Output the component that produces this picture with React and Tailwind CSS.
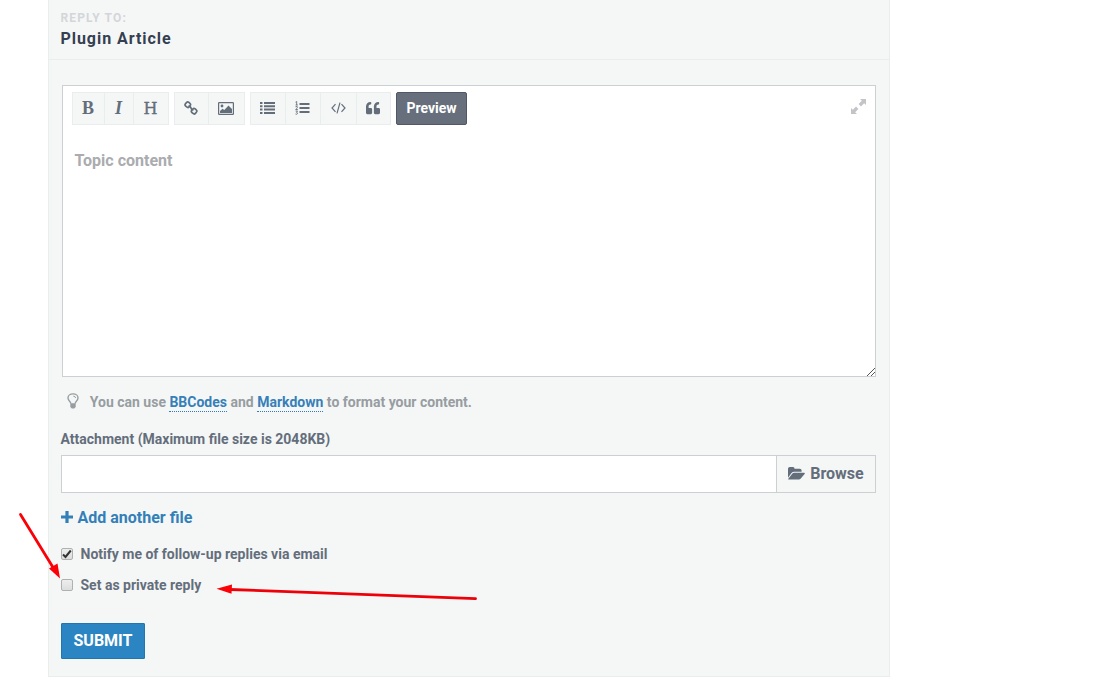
import React from "react";
import { FaQuoteLeft } from "react-icons/fa";

const LinkIcon = () => (
  <svg width="14" height="14" viewBox="0 0 14 14" fill="none" stroke="currentColor">
    <rect x="1.4" y="1.3" width="4.8" height="4.8" rx="1.7" strokeWidth="1.7" transform="rotate(42 3.8 3.7)" />
    <rect x="7.7" y="7.8" width="4.8" height="4.8" rx="1.7" strokeWidth="1.7" transform="rotate(42 10.1 10.2)" />
    <path d="M4.6 5.2Q6.5 4.8 7 7T9.4 9" strokeWidth="1.7" />
  </svg>
);

const ImageIcon = () => (
  <svg width="16" height="13" viewBox="0 0 16 13" fill="currentColor">
    <rect x="0.6" y="0.6" width="14.8" height="11.8" rx="0.6" fill="none" stroke="currentColor" strokeWidth="1.2" />
    <circle cx="4" cy="4" r="1.4" />
    <path d="M2 11V9l2.5-2.2L6.3 8l4.2-4.4L14 7v4z" />
  </svg>
);

const ListIcon = () => (
  <svg width="15" height="12" viewBox="0 0 15 12" fill="currentColor">
    <path d="M0 0h2.5v2H0zM4 0h11v2H4zM0 3.3h2.5v2H0zM4 3.3h11v2H4zM0 6.6h2.5v2H0zM4 6.6h11v2H4zM0 9.9h2.5v2H0zM4 9.9h11v2H4z" />
  </svg>
);

const NumberedIcon = () => (
  <svg width="15" height="14" viewBox="0 0 15 14" fill="none" stroke="currentColor">
    <path d="M4.5 3h10M4.5 7h10M4.5 11h10" strokeWidth="2" />
    <path d="M0.5 1.2L1.7 0.5V4M0.6 4h2.2M0.5 5.8Q2.7 4.8 2.5 6.2Q2.1 7.2 0.7 8.5H2.8M0.6 10H2.5L1.5 11.4Q3 11.6 2.3 12.8Q1.6 13.7 0.5 13" strokeWidth="0.9" />
  </svg>
);

const CodeIcon = () => (
  <svg width="15" height="12" viewBox="0 0 15 12" fill="none" stroke="currentColor" strokeWidth="1.2">
    <path d="M4.5 2.2L1 6l3.5 3.8M10.5 2.2L14 6l-3.5 3.8M9 0.7L6 11.3" />
  </svg>
);

const ExpandIcon = () => (
  <svg width="15" height="15" viewBox="0 0 14 14" fill="currentColor">
    <path d="M8.4 0H14v5.6l-1.7-1.7-3 3-2.2-2.2 3-3zM5.6 14H0V8.4l1.7 1.7 3-3 2.2 2.2-3 3z" />
  </svg>
);

const BulbIcon = () => (
  <svg width="12" height="16" viewBox="0 0 12 16" fill="none" stroke="currentColor">
    <path d="M3.8 10.5C3.8 8.4 1 7.8 1 4.9C1 2.5 3.2 0.9 6 0.9S11 2.5 11 4.9C11 7.8 8.2 8.4 8.2 10.5" strokeWidth="1.4" />
    <path d="M6.3 3.1Q8.5 3.2 8.6 5" strokeWidth="1" />
    <path d="M3.3 10.2h5.4v3.8L7.2 15.6H4.8L3.3 14z" fill="currentColor" stroke="none" />
  </svg>
);

const FolderIcon = () => (
  <svg width="17" height="13" viewBox="0 0 17 13" fill="currentColor">
    <path d="M0 10.8V1.8Q0 0 1.8 0H5Q6.6 0 6.6 1.8H11.8Q13.6 1.8 13.6 3.6V4.8H6.2Q4.6 4.8 3.5 6.1z" />
    <path d="M6.2 5.8H16.2Q17.4 5.8 16.6 6.9L12.8 11.6Q12 12.6 10.8 12.6H.9Q-.3 12.6 .5 11.5L4.2 6.8Q5 5.8 6.2 5.8z" />
  </svg>
);

const PlusIcon = () => (
  <svg width="12" height="12" viewBox="0 0 12 12" fill="currentColor">
    <path d="M4.4 0h3.2v4.4H12v3.2H7.6V12H4.4V7.6H0V4.4h4.4z" />
  </svg>
);

// Grupos de la barra de herramientas
const groups = [
  [
    { id: "bold", width: "w-8", content: <span className="font-['Liberation_Serif',serif] text-[18px] font-bold">B</span> },
    { id: "italic", width: "w-[29px]", content: <span className="font-['Liberation_Serif',serif] text-[18px] font-bold italic">I</span> },
    {
      id: "heading",
      width: "w-[34px]",
      content: <span className="pt-px font-['DejaVu_Serif',serif] text-[16px] font-normal [-webkit-text-stroke:0.4px_currentColor]">H</span>,
    },
  ],
  [
    { id: "link", width: "w-[34px]", content: <LinkIcon /> },
    { id: "image", width: "w-[35px]", content: <ImageIcon /> },
  ],
  [
    { id: "ul", width: "w-[35px]", content: <ListIcon /> },
    { id: "ol", width: "w-[35px]", content: <NumberedIcon /> },
    { id: "code", width: "w-9", content: <CodeIcon /> },
    { id: "quote", width: "w-[33px]", content: <FaQuoteLeft size={14} /> },
  ],
];

const Toolbar = () => (
  <div className="flex">
    {groups.map((group) => (
      <div key={group[0].id} className="mr-[5px] flex h-[33px] divide-x divide-[#e9edee] border border-[#e9edee] bg-[#f5f7f7]">
        {group.map((item) => (
          <button key={item.id} type="button" className={`flex items-center justify-center pr-px pb-px ${item.width}`}>
            {item.content}
          </button>
        ))}
      </div>
    ))}
    <button type="button" className="h-[33px] w-[71px] rounded-[2px] border border-[#4f5864] bg-[#676f7d] text-[14px] text-white">
      Preview
    </button>
  </div>
);

const CheckField = ({ label, checked }) => (
  <label className="flex h-5 items-center text-[14px]">
    <span className="mr-[7.5px] flex size-3 items-center justify-center rounded-[2px] border border-[#b0b0b0] bg-linear-to-b from-[#eeeeee] to-[#dddddd]">
      {checked && (
        <svg className="shrink-0" width="10" height="10" viewBox="0 0 10 10" fill="none" stroke="#333" strokeWidth="2">
          <path d="M1 5.5L3.5 8L8.8 1.5" />
        </svg>
      )}
    </span>
    {label}
  </label>
);

// Flechas que señalan la opción de respuesta privada
const Arrows = () => (
  <svg className="pointer-events-none absolute top-0 left-0" width="1109" height="677" fill="#fb0007">
    <path d="M20.5 514.5L54 569" stroke="#fb0007" strokeWidth="2.8" strokeLinecap="round" />
    <path d="M60 578.5L49 568.5L57.5 563.5z" />
    <path d="M475.5 598.6L230 589.5" stroke="#ee0009" strokeWidth="2.8" strokeLinecap="round" />
    <path d="M216.5 588.7L232 584.5L231.5 593.8z" />
  </svg>
);

export default function App() {
  return (
    <div className="relative h-[677px] overflow-hidden bg-white font-[Roboto,sans-serif] font-bold text-[#646e7b]">
      <section className="ml-12 h-[677px] w-[842px] border-x border-b border-[#e9eded] bg-[#f5f7f7]">
        <header className="h-[60px] border-b border-[#e9eded] pt-[10px] pl-[11.5px]">
          <p className="text-[12px] leading-4 tracking-[1.15px] text-[#d3d6d8]">REPLY TO:</p>
          <h1 className="mt-[2px] text-[16px] leading-[22px] tracking-[0.95px] text-[#344050]">Plugin Article</h1>
        </header>

        <form className="pr-[13px] pl-3">
          <div className="relative mt-[25px] ml-[1px] h-[292px] border border-[#ccd0d2] bg-white pt-[6px] pl-[9px]">
            <Toolbar />
            <p className="mt-[26px] ml-[2.5px] text-[16px] leading-5 text-[#aaacaf]">Topic content</p>
            <span className="absolute top-[13px] right-[9px] text-[#c4c4c8]">
              <ExpandIcon />
            </span>
            <svg className="absolute right-0 bottom-0" width="9" height="9" stroke="#555">
              <path d="M1 9L9 1M5 9L9 5" />
            </svg>
          </div>

          <p className="mt-4 flex h-[19px] items-center pl-[6px] text-[14px] text-[#979da1]">
            <span className="pb-[3px]">
              <BulbIcon />
            </span>
            <span className="ml-[10.8px] leading-[17px]">
              You can use <a className="inline-block border-b border-dotted border-[#337ab7] text-[#377fb8]">BBCodes</a> and{" "}
              <a className="inline-block border-b border-dotted border-[#337ab7] text-[#377fb8]">Markdown</a> to format your content.
            </span>
          </p>

          <p className="mt-[17px] -ml-[0.5px] text-[14px] leading-5">Attachment (Maximum file size is 2048KB)</p>
          <div className="mt-[6px] flex h-[38px] border border-[#ccd0d2]">
            <div className="flex-1 bg-white" />
            <button type="button" className="flex w-[99px] items-center justify-center gap-[5px] border-l border-[#ccd0d2] text-[16px]">
              <span className="pb-[2px]">
                <FolderIcon />
              </span>
              Browse
            </button>
          </div>

          <a className="mt-[15px] -ml-[0.5px] flex h-5 items-center gap-[5px] text-[16px] text-[#337fb8]">
            <span className="pb-[2px]">
              <PlusIcon />
            </span>
            Add another file
          </a>

          <div className="mt-4 flex flex-col gap-[11px]">
            <CheckField label="Notify me of follow-up replies via email" checked />
            <CheckField label="Set as private reply" />
          </div>

          <button type="button" className="mt-7 h-9 w-[84px] rounded-[1px] border border-[#2376ad] bg-[#2a85c2] text-[16px] text-white">
            SUBMIT
          </button>
        </form>
      </section>
      <Arrows />
    </div>
  );
}
